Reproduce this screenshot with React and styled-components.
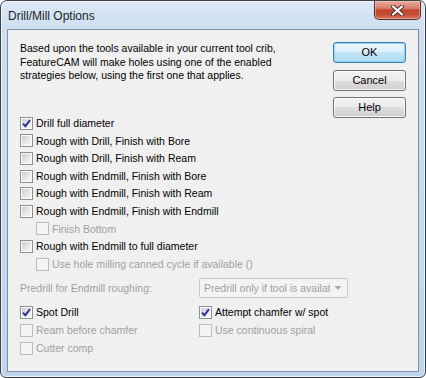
import styled, { createGlobalStyle } from "styled-components"

const GlobalStyle = createGlobalStyle`
  html, body {
    margin: 0;
    padding: 0;
    background: #ffffff;
  }
  body {
    width: 426px;
    height: 378px;
    overflow: hidden;
    font-family: "Liberation Sans", Arial, sans-serif;
  }
`

const strategies = [
    { label: "Drill full diameter", checked: true },
    { label: "Rough with Drill, Finish with Bore" },
    { label: "Rough with Drill, Finish with Ream" },
    { label: "Rough with Endmill, Finish with Bore" },
    { label: "Rough with Endmill, Finish with Ream" },
    { label: "Rough with Endmill, Finish with Endmill" },
    { label: "Finish Bottom", indent: true, disabled: true },
    { label: "Rough with Endmill to full diameter" },
    { label: "Use hole milling canned cycle if available ()", indent: true, disabled: true },
]

const options = [
    { label: "Spot Drill", checked: true },
    { label: "Attempt chamfer w/ spot", checked: true },
    { label: "Ream before chamfer", disabled: true },
    { label: "Use continuous spiral", disabled: true },
    { label: "Cutter comp", disabled: true },
]

function CheckBox({ checked, disabled }) {
    return (
        <Box $disabled={disabled}>
            {checked && (
                <svg width="9" height="9" viewBox="0 0 9 9">
                    <path d="M1 4.6 L3.4 7.2 L8 1.2" fill="none" stroke="#2b2f8f" strokeWidth="1.9" />
                </svg>
            )}
        </Box>
    )
}

function Check({ label, checked, disabled, indent }) {
    return (
        <CheckRow $indent={indent}>
            <CheckBox checked={checked} disabled={disabled} />
            <Label $disabled={disabled}>{label}</Label>
        </CheckRow>
    )
}

export default function App() {
    return (
        <>
            <GlobalStyle />
            <Window>
                <TitleBar>
                    <Title>Drill/Mill Options</Title>
                    <CloseButton>
                        <svg width="13" height="11" viewBox="0 0 13 11">
                            <path d="M2 1.5 L11 9.5 M11 1.5 L2 9.5" stroke="#4a2b28" strokeWidth="4" strokeLinecap="round" />
                            <path d="M2 1.5 L11 9.5 M11 1.5 L2 9.5" stroke="#ffffff" strokeWidth="2.2" strokeLinecap="round" />
                        </svg>
                    </CloseButton>
                </TitleBar>
                <Client>
                    <Header>
                        <Intro>
                            Based upon the tools available in your current tool crib,
                            <br />
                            FeatureCAM will make holes using one of the enabled
                            <br />
                            strategies below, using the first one that applies.
                        </Intro>
                        <Buttons>
                            <Button $primary>OK</Button>
                            <Button>Cancel</Button>
                            <Button>Help</Button>
                        </Buttons>
                    </Header>
                    <StrategyList>
                        {strategies.map((s) => (
                            <Check key={s.label} {...s} />
                        ))}
                    </StrategyList>
                    <PredrillRow>
                        <Label $disabled>Predrill for Endmill roughing:</Label>
                        <Select>
                            <SelectText>Predrill only if tool is availat</SelectText>
                            <svg width="17" height="18" viewBox="0 0 17 18">
                                <path d="M4.5 7 L11.5 7 L8 11 Z" fill="#a8a8a8" />
                            </svg>
                        </Select>
                    </PredrillRow>
                    <OptionGrid>
                        {options.map((o) => (
                            <Check key={o.label} {...o} />
                        ))}
                    </OptionGrid>
                </Client>
            </Window>
        </>
    )
}

const Window = styled.div`
    width: 426px;
    height: 378px;
    box-sizing: border-box;
    border: 1px solid #3c4148;
    border-radius: 7px 7px 6px 6px;
    background: linear-gradient(180deg, #dce8f5 0px, #cddff1 28px, #bfd5ec 100%);
    box-shadow: inset 0 0 0 1px rgba(255, 255, 255, 0.65);
    padding: 0 6px 5px 6px;
    display: flex;
    flex-direction: column;
    overflow: hidden;
`

const TitleBar = styled.div`
    height: 28px;
    margin: 0 -6px;
    padding-left: 7px;
    display: flex;
    justify-content: space-between;
    align-items: flex-start;
`

const Title = styled.span`
    font-family: "Liberation Sans", Arial, sans-serif;
    font-size: 12px;
    color: #1e1e1e;
    line-height: 28px;
    margin-top: 1px;
`

const CloseButton = styled.div`
    width: 47px;
    height: 19px;
    box-sizing: border-box;
    margin-right: 4px;
    border: 1px solid #5e2a24;
    border-top: none;
    border-radius: 0 0 5px 5px;
    background: linear-gradient(180deg, #e9a99b 0%, #d9806f 40%, #c4452e 50%, #c54c36 75%, #d87a5e 100%);
    box-shadow: inset 0 0 0 1px rgba(255, 220, 210, 0.45);
    display: flex;
    align-items: center;
    justify-content: center;
`

const Client = styled.div`
    flex: 1;
    background: #f0f0f0;
    border: 1px solid #7f8fa6;
    padding: 0 12px;
    display: flex;
    flex-direction: column;
    font-size: 10.5px;
    color: #000000;
`

const Header = styled.div`
    display: flex;
    justify-content: space-between;
    align-items: flex-start;
    padding-top: 12px;
`

const Intro = styled.p`
    margin: 0;
    line-height: 13.5px;
`

const Buttons = styled.div`
    display: flex;
    flex-direction: column;
    gap: 6.5px;
`

const Button = styled.div`
    width: 73px;
    height: 21px;
    box-sizing: border-box;
    border: 1px solid ${(p) => (p.$primary ? "#3c7fb1" : "#707070")};
    border-radius: 3px;
    background: ${(p) =>
        p.$primary
            ? "linear-gradient(180deg, #ecf6fc 0%, #dcf0fb 50%, #c2e4f7 50%, #b0dbf3 100%)"
            : "linear-gradient(180deg, #f2f2f2 0%, #ebebeb 50%, #dddddd 50%, #cfcfcf 100%)"};
    box-shadow: inset 0 0 0 1px ${(p) => (p.$primary ? "#93d4f4" : "#fbfbfb")};
    display: flex;
    align-items: center;
    justify-content: center;
    font-size: 11px;
    line-height: 1;
`

const StrategyList = styled.div`
    margin-top: -3.5px;
    display: flex;
    flex-direction: column;
`

const CheckRow = styled.div`
    height: 17.6px;
    display: flex;
    align-items: center;
    gap: 3px;
    padding-left: ${(p) => (p.$indent ? "16px" : "0")};
`

const Box = styled.span`
    width: 13px;
    height: 13px;
    box-sizing: border-box;
    flex-shrink: 0;
    padding: 1px;
    border: 1px solid ${(p) => (p.$disabled ? "#bcbcbc" : "#8e8f8f")};
    background: ${(p) =>
        p.$disabled
            ? "#f4f4f4"
            : "linear-gradient(135deg, #cbced3 0%, #e6e7e9 55%, #f7f7f7 100%) content-box, #fbfbfb"};
    display: flex;
    align-items: center;
    justify-content: center;
`

const Label = styled.span`
    color: ${(p) => (p.$disabled ? "#a0a0a0" : "#000000")};
    white-space: nowrap;
    line-height: 1;
`

const PredrillRow = styled.div`
    display: grid;
    grid-template-columns: 179px 149px;
    align-items: center;
    margin-top: 5px;
`

const Select = styled.div`
    height: 20px;
    box-sizing: border-box;
    border: 1px solid #c8c8c8;
    border-radius: 2px;
    background: #f3f3f3;
    display: flex;
    align-items: center;
    overflow: hidden;
`

const SelectText = styled.span`
    flex: 1;
    padding-left: 4px;
    color: #a0a0a0;
    white-space: nowrap;
    overflow: hidden;
`

const OptionGrid = styled.div`
    margin-top: 6px;
    display: grid;
    grid-template-columns: 179px 1fr;
    grid-auto-rows: 18px;
`
